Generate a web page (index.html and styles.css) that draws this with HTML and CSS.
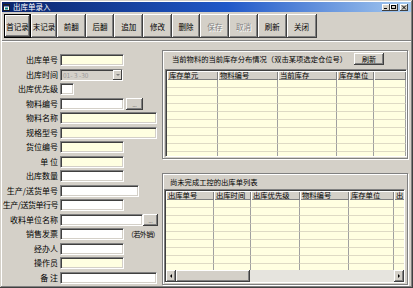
FILE: index.html
```html
<!DOCTYPE html>
<html lang="zh-CN">
<head>
    <meta charset="UTF-8">
    <meta name="viewport" content="width=device-width, initial-scale=1.0">
    <title>出库单录入</title>
    <link rel="stylesheet" href="styles.css">
</head>
<body>
    <div class="window">
        <div class="titlebar">
            <svg class="app-icon" width="7" height="7" viewBox="0 0 7 7">
                <rect x="0.5" y="0.5" width="6" height="6" fill="#fff" stroke="#202020" stroke-width="1"/>
                <rect x="1" y="1" width="5" height="1.5" fill="#0a246a"/>
                <rect x="2" y="3.5" width="3" height="2" fill="#008080"/>
            </svg>
            <span class="title">出库单录入</span>
            <div class="caption-btns">
                <span class="cap-btn">
                    <svg width="8" height="7" viewBox="0 0 8 7"><rect x="2" y="4" width="3" height="1" fill="#000"/></svg>
                </span>
                <span class="cap-btn">
                    <svg width="8" height="7" viewBox="0 0 8 7"><rect x="1.5" y="1.5" width="4" height="3" fill="none" stroke="#000" stroke-width="1"/><rect x="1" y="1" width="5" height="1" fill="#000"/></svg>
                </span>
                <span class="cap-btn cap-close">
                    <svg width="8" height="7" viewBox="0 0 8 7"><path d="M2 1.5 L6 5.5 M6 1.5 L2 5.5" stroke="#000" stroke-width="1"/></svg>
                </span>
            </div>
        </div>

        <div class="toolbar">
            <button class="tb-btn tb-first tb-default">首记录</button>
            <button class="tb-btn tb-second">末记录</button>
            <button class="tb-btn">前翻</button>
            <button class="tb-btn">后翻</button>
            <button class="tb-btn">追加</button>
            <button class="tb-btn">修改</button>
            <button class="tb-btn">删除</button>
            <button class="tb-btn" disabled>保存</button>
            <button class="tb-btn" disabled>取消</button>
            <button class="tb-btn">刷新</button>
            <button class="tb-btn tb-wide">关闭</button>
        </div>

        <div class="content">
            <div class="form">
                <div class="row"><label>出库单号</label><input type="text" class="field w-short note"></div>
                <div class="row">
                    <label>出库时间</label>
                    <div class="combo">
                        <span class="combo-text">01- 3 -30</span>
                        <span class="combo-btn"></span>
                    </div>
                </div>
                <div class="row"><label>出库优先级</label><input type="text" class="field w-tiny"></div>
                <div class="row"><label>物料编号</label><input type="text" class="field w-short"><button class="btn-dots dots-gap">...</button></div>
                <div class="row"><label>物料名称</label><input type="text" class="field w-long note"></div>
                <div class="row"><label>规格型号</label><input type="text" class="field w-long note"></div>
                <div class="row"><label>货位编号</label><input type="text" class="field w-short note"></div>
                <div class="row"><label>单 位</label><input type="text" class="field w-short note"></div>
                <div class="row"><label>出库数量</label><input type="text" class="field w-short"></div>
                <div class="row"><label>生产/送货单号</label><input type="text" class="field w-mid"></div>
                <div class="row"><label class="tight">生产/送货单行号</label><input type="text" class="field w-short"></div>
                <div class="row"><label>收料单位名称</label><input type="text" class="field w-link"><button class="btn-dots btn-dots-sm">...</button></div>
                <div class="row"><label>销售发票</label><input type="text" class="field w-short"><span class="hint">（若外销）</span></div>
                <div class="row"><label>经办人</label><input type="text" class="field w-short"></div>
                <div class="row"><label>操作员</label><input type="text" class="field w-short note"></div>
                <div class="row"><label>备 注</label><input type="text" class="field w-long"></div>
            </div>

            <div class="side">
                <section class="panel panel-stock">
                    <div class="panel-head">
                        <span class="panel-caption">当前物料的当前库存分布情况（双击某项选定仓位号）</span>
                        <button class="btn-small">刷新</button>
                    </div>
                    <div class="grid grid-stock">
                        <table class="grid-table">
                            <colgroup>
                                <col style="width:51px"><col style="width:60px"><col style="width:59px"><col style="width:37px"><col>
                            </colgroup>
                            <thead>
                                <tr><th>库存单元</th><th>物料编号</th><th>当前库存</th><th>库存单位</th><th></th></tr>
                            </thead>
                            <tbody>
                                <tr><td></td><td></td><td></td><td></td><td></td></tr>
                                <tr><td></td><td></td><td></td><td></td><td></td></tr>
                                <tr><td></td><td></td><td></td><td></td><td></td></tr>
                                <tr><td></td><td></td><td></td><td></td><td></td></tr>
                                <tr><td></td><td></td><td></td><td></td><td></td></tr>
                                <tr><td></td><td></td><td></td><td></td><td></td></tr>
                                <tr><td></td><td></td><td></td><td></td><td></td></tr>
                                <tr><td></td><td></td><td></td><td></td><td></td></tr>
                                <tr><td></td><td></td><td></td><td></td><td></td></tr>
                                <tr><td></td><td></td><td></td><td></td><td></td></tr>
                            </tbody>
                        </table>
                    </div>
                </section>

                <section class="panel panel-orders">
                    <div class="panel-head panel-head-tall">
                        <span class="panel-caption caption-orders">尚未完成工控的出库单列表</span>
                    </div>
                    <div class="grid grid-orders">
                        <div class="grid-body">
                            <table class="grid-table table-wide">
                                <colgroup>
                                    <col style="width:48px"><col style="width:37px"><col style="width:49px"><col style="width:49px"><col style="width:45px"><col style="width:50px">
                                </colgroup>
                                <thead>
                                    <tr><th>出库单号</th><th>出库时间</th><th>出库优先级</th><th>物料编号</th><th>库存单位</th><th>出</th></tr>
                                </thead>
                                <tbody>
                                    <tr><td></td><td></td><td></td><td></td><td></td><td></td></tr>
                                    <tr><td></td><td></td><td></td><td></td><td></td><td></td></tr>
                                    <tr><td></td><td></td><td></td><td></td><td></td><td></td></tr>
                                    <tr><td></td><td></td><td></td><td></td><td></td><td></td></tr>
                                    <tr><td></td><td></td><td></td><td></td><td></td><td></td></tr>
                                    <tr><td></td><td></td><td></td><td></td><td></td><td></td></tr>
                                    <tr><td></td><td></td><td></td><td></td><td></td><td></td></tr>
                                    <tr><td></td><td></td><td></td><td></td><td></td><td></td></tr>
                                    <tr><td></td><td></td><td></td><td></td><td></td><td></td></tr>
                                </tbody>
                            </table>
                        </div>
                        <div class="hscroll">
                            <span class="sb-btn sb-left"></span>
                            <span class="sb-thumb"></span>
                            <span class="sb-btn sb-right"></span>
                        </div>
                    </div>
                </section>
            </div>
        </div>
    </div>
</body>
</html>
```

FILE: styles.css
```css
* {
    box-sizing: border-box;
}

body {
    margin: 0;
    background-color: #d4d0c8;
    font-family: "Noto Sans CJK SC", "Noto Sans", sans-serif;
    font-size: 8px;
    color: #000;
}

.window {
    width: 413px;
    height: 288px;
    padding: 2px;
    display: flex;
    flex-direction: column;
    background-color: #d4d0c8;
    box-shadow: inset -1px -1px 0 #404040, inset 1px 1px 0 #d4d0c8, inset -2px -2px 0 #808080, inset 2px 2px 0 #fff;
}

/* title bar */
.titlebar {
    height: 10px;
    display: flex;
    align-items: center;
    padding: 0 3px 0 1px;
    background: linear-gradient(to right, #0a246a, #2058c8 55%, #a6caf0);
    color: #fff;
}

.app-icon {
    flex-shrink: 0;
    margin-right: 3px;
}

.title {
    font-size: 7.5px;
    line-height: 10px;
}

.caption-btns {
    margin-left: auto;
    display: flex;
}

.cap-btn {
    display: block;
    width: 8px;
    height: 7px;
    background-color: #d4d0c8;
    box-shadow: inset -1px -1px 0 #404040, inset 1px 1px 0 #fff;
}

.cap-btn svg {
    display: block;
}

.cap-close {
    margin-left: 2px;
}

/* toolbar */
.toolbar {
    height: 29px;
    display: flex;
    padding: 2px 0 2px 2px;
    border-bottom: 1px solid #808080;
}

.tb-btn {
    width: 28.7px;
    height: 24px;
    padding: 0;
    border: none;
    background-color: #d4d0c8;
    font-family: inherit;
    font-size: 7.5px;
    color: #000;
    box-shadow: inset -1px -1px 0 #404040, inset 1px 1px 0 #fff, inset -2px -2px 0 #808080;
}

.tb-btn:disabled {
    color: #808080;
    text-shadow: 1px 1px 0 #fff;
}

.tb-first {
    width: 27px;
}

.tb-second {
    width: 26px;
}

.tb-wide {
    width: 30px;
}

.tb-default {
    box-shadow: inset 0 0 0 1px #000, inset -2px -2px 0 #404040, inset 2px 2px 0 #fff, inset -3px -3px 0 #808080;
}

/* main area */
.content {
    flex: 1;
    display: flex;
    border-top: 1px solid #fff;
}

.form {
    width: 160px;
    padding-top: 12px;
    display: flex;
    flex-direction: column;
    gap: 2.53px;
}

.row {
    height: 12px;
    display: flex;
    align-items: center;
}

.row label {
    width: 56px;
    margin-right: 2px;
    display: flex;
    justify-content: flex-end;
    white-space: nowrap;
    line-height: 12px;
}

.row label.tight {
    letter-spacing: -0.5px;
}

.field {
    height: 12px;
    margin: 0;
    padding: 0;
    border: 1px solid;
    border-color: #808080 #fff #fff #808080;
    background-color: #fff;
    box-shadow: inset 1px 1px 0 #404040, inset -1px -1px 0 #d4d0c8;
    outline: none;
}

.note {
    background-color: #ffffe1;
}

.w-tiny {
    width: 14px;
}

.w-short {
    width: 64px;
}

.w-mid {
    width: 79px;
}

.w-link {
    width: 83px;
}

.w-long {
    width: 97px;
}

.combo {
    width: 63px;
    height: 12px;
    display: flex;
    border: 1px solid;
    border-color: #808080 #fff #fff #808080;
    background-color: #d4d0c8;
    box-shadow: inset 1px 1px 0 #404040;
}

.combo-text {
    flex: 1;
    padding-left: 2px;
    font-size: 6.5px;
    line-height: 10px;
    color: #9a9a9a;
}

.combo-btn {
    width: 9px;
    height: 10px;
    display: flex;
    align-items: center;
    justify-content: center;
    box-shadow: inset -1px -1px 0 #404040, inset 1px 1px 0 #fff;
}

.combo-btn::before {
    content: "";
    border-top: 2px solid #808080;
    border-left: 2px solid transparent;
    border-right: 2px solid transparent;
}

.btn-dots {
    width: 15px;
    height: 12px;
    padding: 0;
    border: none;
    background-color: #d4d0c8;
    font-family: inherit;
    font-size: 5px;
    line-height: 14px;
    color: #606060;
    box-shadow: inset -1px -1px 0 #404040, inset 1px 1px 0 #fff, inset -2px -2px 0 #808080;
}

.dots-gap {
    width: 17px;
    margin-left: 2px;
}

.hint {
    margin-left: 3px;
    font-size: 7px;
    letter-spacing: -0.6px;
    white-space: nowrap;
}

/* right column */
.side {
    width: 246px;
    padding-top: 8px;
}

.panel {
    border: 1px solid #808080;
    box-shadow: inset 1px 1px 0 #fff, 1px 1px 0 #fff;
}

.panel-stock {
    height: 109px;
    padding: 2px 0 0 2px;
}

.panel-orders {
    height: 112px;
    margin-top: 14px;
    padding: 0 2px 0 1px;
    display: flex;
    flex-direction: column;
}

.panel-head {
    height: 12px;
    display: flex;
    align-items: center;
}

.panel-head-tall {
    height: 15px;
    flex-shrink: 0;
}

.panel-caption {
    margin-left: 7px;
    font-size: 7.3px;
    white-space: nowrap;
}

.caption-orders {
    margin-left: 6px;
}

.btn-small {
    width: 30px;
    height: 12px;
    margin-left: auto;
    margin-right: 23px;
    padding: 0;
    border: none;
    background-color: #d4d0c8;
    font-family: inherit;
    font-size: 7px;
    box-shadow: inset -1px -1px 0 #404040, inset 1px 1px 0 #fff, inset -2px -2px 0 #808080;
}

/* grids */
.grid {
    border: 1px solid;
    border-color: #808080 #fff #fff #808080;
    background-color: #ffffe1;
    padding: 1px 0 0 1px;
    box-shadow: inset 1px 1px 0 #404040;
    overflow: hidden;
}

.grid-stock {
    height: 88px;
    margin-top: 4px;
}

.grid-orders {
    height: 94px;
    display: flex;
    flex-direction: column;
}

.grid-body {
    flex: 1;
    overflow: hidden;
}

.grid-table {
    width: 100%;
    table-layout: fixed;
    border-collapse: separate;
    border-spacing: 0;
}

.table-wide {
    width: 278px;
}

.grid-table th {
    height: 9px;
    padding: 0 0 0 2px;
    background-color: #d4d0c8;
    font-size: 7.3px;
    font-weight: normal;
    line-height: 9px;
    text-align: left;
    white-space: nowrap;
    overflow: hidden;
    box-shadow: inset 1px 1px 0 #fff, inset -1px -1px 0 #808080;
}

.grid-table td {
    height: 8px;
    padding: 0;
    font-size: 0;
    line-height: 0;
    border-right: 1px solid #a0a0a0;
    border-bottom: 1px solid #dedac4;
}

.hscroll {
    height: 12px;
    flex-shrink: 0;
    display: flex;
    background-color: #e6e4de;
}

.sb-btn {
    width: 10px;
    height: 12px;
    display: flex;
    align-items: center;
    justify-content: center;
    background-color: #d4d0c8;
    box-shadow: inset -1px -1px 0 #404040, inset 1px 1px 0 #fff, inset -2px -2px 0 #808080;
}

.sb-btn::before {
    content: "";
    border-top: 2px solid transparent;
    border-bottom: 2px solid transparent;
}

.sb-left::before {
    border-right: 2px solid #000;
}

.sb-right {
    margin-left: auto;
}

.sb-right::before {
    border-left: 2px solid #000;
}

.sb-thumb {
    width: 74px;
    height: 12px;
    background-color: #d4d0c8;
    box-shadow: inset -1px -1px 0 #404040, inset 1px 1px 0 #fff, inset -2px -2px 0 #808080;
}
```
